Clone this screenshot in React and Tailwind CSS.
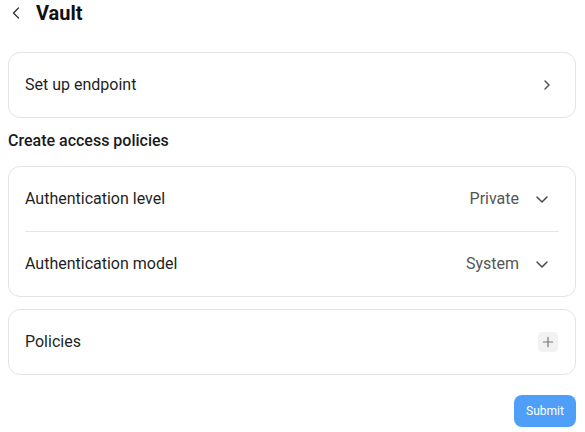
import React from "react";

const ChevronLeft = ({ className }) => (
  <svg viewBox="0 0 24 24" fill="none" stroke="currentColor" strokeWidth="1.6" strokeLinecap="round" strokeLinejoin="round" className={className}>
    <path d="M15 6l-6 6 6 6" />
  </svg>
);
const ChevronRight = ({ className }) => (
  <svg viewBox="0 0 24 24" fill="none" stroke="currentColor" strokeWidth="1.5" strokeLinecap="round" strokeLinejoin="round" className={className}>
    <path d="M10 8l4 4-4 4" />
  </svg>
);
const ChevronDown = ({ className }) => (
  <svg viewBox="0 0 24 24" fill="none" stroke="currentColor" strokeWidth="1.7" strokeLinecap="round" strokeLinejoin="round" className={className}>
    <path d="M6 9.5l6 6 6-6" />
  </svg>
);
const Plus = ({ className }) => (
  <svg viewBox="0 0 24 24" fill="none" stroke="currentColor" strokeWidth="1.8" strokeLinecap="round" className={className}>
    <path d="M12 5v14M5 12h14" />
  </svg>
);

function SelectRow({ label, value }) {
  return (
    <div className="h-16 flex items-center justify-between">
      <span className="text-[16px] text-[#1f1f1f]">{label}</span>
      <div className="flex items-center gap-[13px] pr-[7px]">
        <span className="text-[16px] text-[#555]">{value}</span>
        <ChevronDown className="w-5 h-5 text-[#444]" />
      </div>
    </div>
  );
}

export default function App() {
  return (
    <div className="w-[585px] h-[432px] bg-white pl-2 pr-[9px]" style={{ fontFamily: "Roboto, 'Noto Sans', sans-serif" }}>
      <div className="h-[26px] flex items-center">
        <ChevronLeft className="w-5 h-5 ml-[-2px] text-[#333]" />
        <span className="ml-[10px] text-[20px] font-bold text-[#111] leading-none">Vault</span>
      </div>

      <div className="mt-[26px] border border-[#e3e3e3] rounded-xl px-4 h-[66px] flex items-center justify-between">
        <span className="text-[16px] text-[#1f1f1f]">Set up endpoint</span>
        <ChevronRight className="w-6 h-6 text-[#555]" />
      </div>

      <div className="mt-[13px] h-5 flex items-center text-[16px] font-medium text-[#1a1a1a]">Create access policies</div>

      <div className="mt-[15px] border border-[#e3e3e3] rounded-xl px-4">
        <SelectRow label="Authentication level" value="Private" />
        <div className="h-px bg-[#e5e5e5]" />
        <SelectRow label="Authentication model" value="System" />
      </div>

      <div className="mt-3 border border-[#e3e3e3] rounded-xl px-4 h-[66px] flex items-center justify-between">
        <span className="text-[16px] text-[#1f1f1f]">Policies</span>
        <div className="w-5 h-5 mr-[1px] rounded bg-[#f2f2f2] flex items-center justify-center">
          <Plus className="w-4 h-4 text-[#777]" />
        </div>
      </div>

      <div className="mt-5 flex justify-end">
        <button className="h-8 w-[62px] rounded-lg bg-[#4f9ff8] text-white text-[12px]">Submit</button>
      </div>
    </div>
  );
}
